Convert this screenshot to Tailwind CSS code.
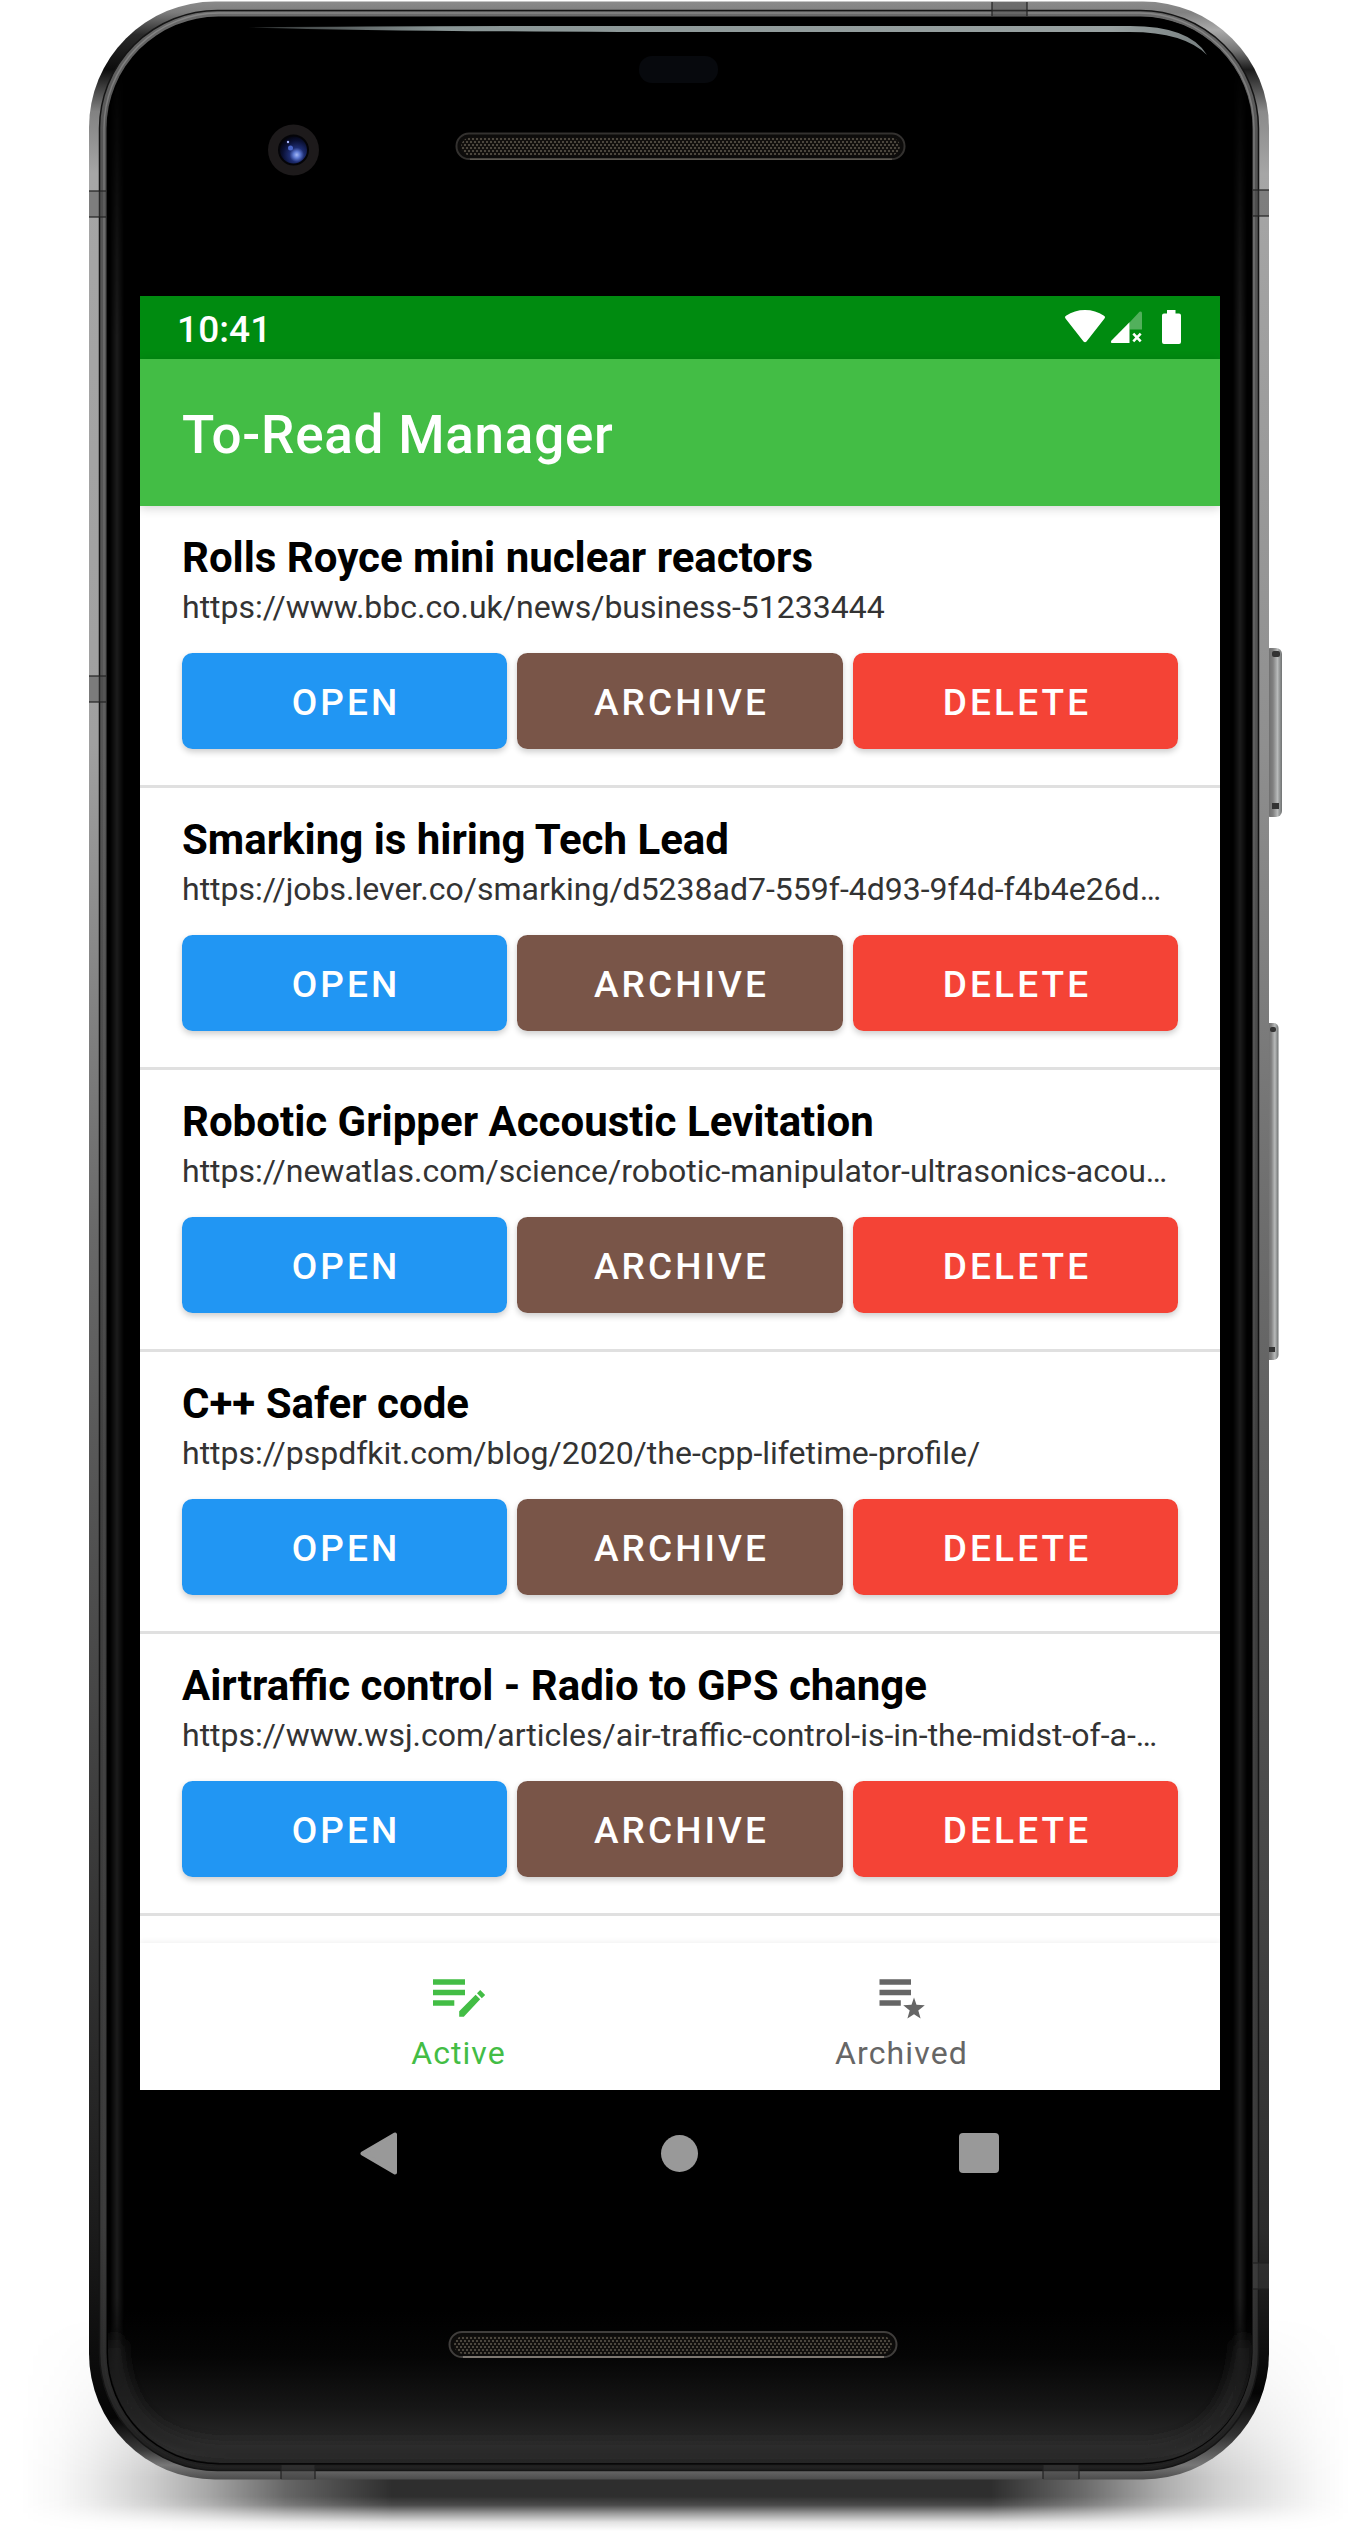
<!DOCTYPE html>
<html lang="en">
<head>
<meta charset="utf-8">
<title>To-Read Manager</title>
<script src="https://cdn.jsdelivr.net/npm/@tailwindcss/browser@4"></script>
</head>
<body class="bg-white">
<main class="relative w-[1370px] h-[2534px] overflow-hidden px-[140px] pt-[296px] font-[Roboto,sans-serif]">
  <!-- device frame -->
  <svg class="absolute inset-0 w-[1370px] h-[2534px]" viewBox="0 0 1370 2534" aria-hidden="true">
    <defs>
      <linearGradient id="rimL" gradientUnits="userSpaceOnUse" x1="0" y1="0" x2="0" y2="2480">
        <stop offset="0" stop-color="#8c8c8c"/><stop offset=".005" stop-color="#7d7d7d"/><stop offset=".014" stop-color="#2a2a2a"/><stop offset=".028" stop-color="#0c0c0c"/><stop offset=".045" stop-color="#828282"/><stop offset=".07" stop-color="#a6a6a6"/>
        <stop offset=".3" stop-color="#a0a0a0"/><stop offset=".5" stop-color="#686868"/><stop offset=".75" stop-color="#3a3a3a"/><stop offset=".9" stop-color="#1b1b1b"/><stop offset=".975" stop-color="#050505"/><stop offset=".988" stop-color="#3a3a3a"/><stop offset=".994" stop-color="#777"/><stop offset="1" stop-color="#4a4a4a"/>
      </linearGradient>
      <linearGradient id="rimR" gradientUnits="userSpaceOnUse" x1="0" y1="0" x2="0" y2="2480">
        <stop offset="0" stop-color="#8c8c8c"/><stop offset=".005" stop-color="#808080"/><stop offset=".012" stop-color="#aaa"/><stop offset=".02" stop-color="#777"/><stop offset=".028" stop-color="#1c1c1c"/><stop offset=".045" stop-color="#8a8a8a"/><stop offset=".07" stop-color="#a6a6a6"/>
        <stop offset=".3" stop-color="#8f8f8f"/><stop offset=".5" stop-color="#6c6c6c"/><stop offset=".77" stop-color="#444"/><stop offset=".9" stop-color="#2b2b2b"/><stop offset=".965" stop-color="#040404"/><stop offset=".982" stop-color="#333"/><stop offset=".994" stop-color="#777"/><stop offset="1" stop-color="#4a4a4a"/>
      </linearGradient>
      <linearGradient id="bevel" gradientUnits="userSpaceOnUse" x1="0" y1="8" x2="0" y2="2472">
        <stop offset="0" stop-color="#6b6b6b"/><stop offset=".05" stop-color="#555"/><stop offset=".3" stop-color="#555"/><stop offset=".6" stop-color="#3f3f3f"/><stop offset=".9" stop-color="#3a3a3a"/><stop offset="1" stop-color="#1e1e1e"/>
      </linearGradient>
      <linearGradient id="bevelLine" gradientUnits="userSpaceOnUse" x1="0" y1="8" x2="0" y2="2472">
        <stop offset="0" stop-color="#999" stop-opacity=".6"/><stop offset=".3" stop-color="#777" stop-opacity=".35"/><stop offset="1" stop-color="#444" stop-opacity=".1"/>
      </linearGradient>
      <linearGradient id="chin" gradientUnits="userSpaceOnUse" x1="0" y1="2310" x2="0" y2="2464">
        <stop offset="0" stop-color="#000"/><stop offset=".3" stop-color="#050505"/><stop offset=".65" stop-color="#171717"/><stop offset=".92" stop-color="#2d2d2d"/><stop offset="1" stop-color="#202020"/>
      </linearGradient>
      <linearGradient id="streak" x1="0" y1="0" x2="1" y2="0">
        <stop offset="0" stop-color="#8e9899" stop-opacity=".3"/><stop offset=".2" stop-color="#8a9696"/><stop offset=".9" stop-color="#98a1a1"/><stop offset="1" stop-color="#777f80"/>
      </linearGradient>
      <linearGradient id="edgeGlow" x1="0" y1="0" x2="1" y2="0">
        <stop offset="0" stop-color="#1c1c1c" stop-opacity="0"/><stop offset=".5" stop-color="#1c1c1c"/><stop offset="1" stop-color="#1c1c1c" stop-opacity="0"/>
      </linearGradient>
      <linearGradient id="glowFade" x1="0" y1="0" x2="0" y2="1">
        <stop offset="0" stop-color="#000"/><stop offset=".12" stop-color="#fff"/><stop offset=".96" stop-color="#fff"/><stop offset="1" stop-color="#000"/>
      </linearGradient>
      <mask id="glowMask" maskUnits="userSpaceOnUse" x="100" y="60" width="1160" height="2330"><rect x="100" y="60" width="1160" height="2330" fill="url(#glowFade)"/></mask>
      <linearGradient id="key" x1="0" y1="0" x2="1" y2="0">
        <stop offset="0" stop-color="#5c5c5c"/><stop offset=".5" stop-color="#808080"/><stop offset=".75" stop-color="#b8baba"/><stop offset="1" stop-color="#6e7171"/>
      </linearGradient>
      <radialGradient id="lens" cx=".62" cy=".68" r=".75">
        <stop offset="0" stop-color="#a5b8f5"/><stop offset=".16" stop-color="#5f7bd4"/><stop offset=".36" stop-color="#1d2c70"/><stop offset=".7" stop-color="#0a1033"/><stop offset="1" stop-color="#020208"/>
      </radialGradient>
      <linearGradient id="shadeX" gradientUnits="userSpaceOnUse" x1="20" y1="0" x2="1350" y2="0">
        <stop offset="0" stop-opacity="0"/><stop offset=".03" stop-opacity=".03"/><stop offset=".055" stop-opacity=".08"/><stop offset=".1" stop-opacity=".2"/><stop offset=".14" stop-opacity=".34"/><stop offset=".2" stop-opacity=".6"/><stop offset=".28" stop-opacity=".82"/>
        <stop offset=".73" stop-opacity=".82"/><stop offset=".8" stop-opacity=".58"/><stop offset=".86" stop-opacity=".32"/><stop offset=".9" stop-opacity=".19"/><stop offset=".945" stop-opacity=".09"/><stop offset=".975" stop-opacity=".03"/><stop offset="1" stop-opacity="0"/>
      </linearGradient>
      <linearGradient id="shadeY" gradientUnits="userSpaceOnUse" x1="0" y1="2315" x2="0" y2="2531">
        <stop offset="0" stop-color="#000"/><stop offset=".3" stop-color="#444"/><stop offset=".55" stop-color="#999"/><stop offset=".75" stop-color="#fff"/><stop offset=".84" stop-color="#fff"/><stop offset=".88" stop-color="#ddd"/><stop offset=".92" stop-color="#777"/><stop offset=".96" stop-color="#222"/><stop offset="1" stop-color="#000"/>
      </linearGradient>
      <mask id="shadeMask" maskUnits="userSpaceOnUse" x="0" y="2300" width="1370" height="234"><rect y="2300" width="1370" height="234" fill="url(#shadeY)"/></mask>
      <pattern id="mesh" width="4" height="6" patternUnits="userSpaceOnUse">
        <rect width="4" height="6" fill="#12100e"/><rect x="0" y="0" width="2" height="2" fill="#4c473e"/><rect x="2" y="3" width="2" height="2" fill="#4c473e"/>
      </pattern>
      <filter id="soft" x="-20%" y="-60%" width="140%" height="220%"><feGaussianBlur stdDeviation="8"/></filter>
      <clipPath id="left"><rect width="680" height="2534"/></clipPath>
      <clipPath id="right"><rect x="680" width="690" height="2534"/></clipPath>
      <clipPath id="glassClip"><rect x="108" y="17" width="1144" height="2447" rx="112"/></clipPath>
    </defs>

    <!-- ground shadow -->
    <rect x="20" y="2310" width="1330" height="224" fill="url(#shadeX)" mask="url(#shadeMask)"/>

    <!-- side keys -->
    <rect x="1264" y="648" width="18" height="169" rx="6" fill="url(#key)"/>
    <rect x="1272" y="651" width="8" height="6" rx="2" fill="#333"/><rect x="1272" y="803" width="7" height="6" fill="#333"/>
    <rect x="1264" y="1023" width="14.500" height="337" rx="5" fill="url(#key)"/>
    <rect x="1270" y="1027" width="6" height="5" rx="2" fill="#333"/><rect x="1269" y="1347" width="6" height="5" fill="#333"/>

    <!-- metal rim -->
    <rect x="89" y="1.500" width="1180" height="2478" rx="126" fill="url(#rimL)" clip-path="url(#left)"/>
    <rect x="89" y="1.500" width="1180" height="2478" rx="126" fill="url(#rimR)" clip-path="url(#right)"/>
    <rect x="99.500" y="10.500" width="1159" height="2460" rx="118" fill="url(#bevel)" stroke="#151515" stroke-width="1.500"/>
    <rect x="104" y="13" width="1150" height="2454" rx="115" fill="none" stroke="url(#bevelLine)" stroke-width="1.500"/>
    <path fill="#444" fill-opacity=".4" d="M89 191h17v26H89zM89 676h17v26H89zM1253 190h16v26h-16zM1253 2263h16v26h-16zM992 2h35v14h-35zM281 2465h34v15h-34zM1043 2465h36v15h-36z"/>
    <path stroke="#222" stroke-opacity=".8" stroke-width="1.500" d="M89 191h17M89 217h17M89 676h17M89 702h17M1253 190h16M1253 216h16M1253 2263h16M1253 2289h16M992 2v14M1027 2v14M281 2465v14M315 2465v14M1043 2465v14M1079 2465v14"/>

    <!-- glass -->
    <rect x="106.500" y="16.500" width="1146" height="2448" rx="112" fill="#000"/>
    <rect x="108" y="17" width="1144" height="2446" rx="111" fill="url(#chin)"/>
    <g clip-path="url(#glassClip)">
      <g mask="url(#glowMask)">
        <rect x="110" y="60" width="14" height="2330" fill="url(#edgeGlow)"/>
        <rect x="1233" y="60" width="14" height="2330" fill="url(#edgeGlow)"/>
      </g>
      <path d="M114 2345q4 104 111 107H1143q92-3 101-107" fill="none" stroke="#2b2b2b" stroke-width="12" stroke-linecap="round" filter="url(#soft)"/>
    </g>
    <path d="M248 27.500Q380 26 620 26H1130Q1190 26 1207 55Q1184 32 1130 32H620Q380 31 248 27.500Z" fill="url(#streak)"/>

    <!-- sensor, camera, speakers -->
    <rect x="639" y="56" width="79" height="27" rx="13" fill="#07090d"/>
    <circle cx="293.500" cy="150" r="25.500" fill="#1d1a1b"/>
    <circle cx="293.500" cy="150" r="15.500" fill="#040408"/>
    <circle cx="293.500" cy="150" r="13.500" fill="url(#lens)"/>
    <circle cx="290.500" cy="148" r="2.500" fill="#4a66c8"/><circle cx="288" cy="142" r="1.200" fill="#aab8ff"/>
    <rect x="456.500" y="133.500" width="448" height="25.500" rx="12.500" fill="#0d0c0b" stroke="#33312f" stroke-width="2"/>
    <rect x="461" y="137.500" width="439" height="18" rx="9" fill="url(#mesh)"/>
    <path d="M470 159.200H892" stroke="#5c5851" stroke-width="1.500"/>
    <rect x="449.500" y="2332" width="447" height="25" rx="12.500" fill="#0d0c0b" stroke="#403e3c" stroke-width="2"/>
    <rect x="454" y="2336" width="438" height="18" rx="9" fill="url(#mesh)"/>
    <path d="M463 2357H884" stroke="#7d7770" stroke-width="1.800"/>
  </svg>

  <!-- screen -->
  <div class="relative flex h-[1920px] w-[1080px] flex-col bg-black">
    <div class="flex h-[63px] shrink-0 items-center justify-between bg-[#008b10] pl-[37px] pr-[39px] text-white">
      <span class="text-[37px] leading-none font-medium tracking-[0.1px] pt-[3px]">10:41</span>
      <svg class="h-[35px] w-[118px]" viewBox="0 0 118 35" fill="#fff" aria-hidden="true">
        <path d="M2.500 8.500Q1 7 3 5.700Q11.500 0 22 0T41 5.700Q43 7 41.500 8.500L23.500 31.500Q22 33 20.500 31.500Z"/>
        <path d="M76.500 1.800Q79 .5 79 3.500V19.500H66.500V12.500Z" fill-opacity=".32"/>
        <path d="M66.500 12.200V33H49Q47 32.500 48.500 30.500Z"/>
        <path d="M70.300 23.700L77.700 31.300M77.700 23.700L70.300 31.300" stroke="#fff" stroke-width="2.600"/>
        <path d="M104 0h8.500v3.500H116q2 0 2 2V32q0 2-2 2h-15q-2 0-2-2V5.500q0-2 2-2h3Z"/>
      </svg>
    </div>
    <header class="relative z-10 flex h-[147px] shrink-0 items-center bg-[#43bd45] px-[42px] pt-[5px] shadow-[0_2px_10px_rgba(0,0,0,0.18)]">
      <h1 class="text-[53px] leading-none font-medium tracking-[0.75px] whitespace-nowrap text-white">To-Read Manager</h1>
    </header>
    <div id="list" class="h-[1437px] shrink-0 overflow-hidden bg-white"></div>
    <nav class="relative flex h-[147px] shrink-0 justify-center bg-white shadow-[0_-2px_5px_rgba(0,0,0,0.05)]">
      <a class="flex w-[443px] flex-col items-center pt-[31px] text-[#43bd45]">
        <svg class="-ml-[2px] h-[46px] w-[56px]" viewBox="0 0 56 46" fill="currentColor" aria-hidden="true"><path d="M3 5.300h32v5.500H3zM3 15.800h32v5.500H3zM3 26.300h21.300v5.500H3zM29.200 37.200L45.600 20.700L50.200 25.200L33.800 42.800H29.200ZM47 19.300L50.200 16L55.200 21L51.800 24.200Z"/></svg>
        <span class="mt-[17px] text-[32px] leading-none tracking-[1.06px]">Active</span>
      </a>
      <a class="flex w-[443px] flex-col items-center pt-[31px] text-[#666]">
        <svg class="-ml-[2px] h-[46px] w-[56px]" viewBox="0 0 56 46" fill="currentColor" aria-hidden="true"><path d="M6.500 5.300h31.500v5.500H6.500zM6.500 15.800h31.500v5.500H6.500zM6.500 26.300h21.300v5.500H6.500zM41 23.500L43.500 30.800L51.800 31.300L45.300 36.500L47.600 44.500L41 40.200L34.400 44.500L36.700 36.500L30.200 31.300L38.500 30.800Z"/></svg>
        <span class="mt-[17px] text-[32px] leading-none tracking-[1.15px]">Archived</span>
      </a>
    </nav>
    <div class="flex h-[126px] shrink-0 items-center justify-between pl-[220px] pr-[221px]">
      <svg class="h-[43px] w-[40px]" viewBox="0 0 40 43" fill="#999" stroke="#999" stroke-width="4" stroke-linejoin="round" aria-hidden="true"><path d="M2.500 21.500L35 2.500V40.500Z"/></svg>
      <div class="size-[37px] rounded-full bg-[#999]"></div>
      <div class="size-[40px] rounded-[4px] bg-[#999]"></div>
    </div>
  </div>
</main>
<template id="row">
  <article class="h-[282px] border-b-[3px] border-[#e0e0e0] px-[42px] pt-[27px]">
    <h2 class="text-[42px] leading-[50px] font-bold whitespace-nowrap text-black"></h2>
    <p class="h-[49px] overflow-visible whitespace-nowrap text-[32px] leading-[49px] text-[#333]"></p>
    <div class="mt-[21px] grid h-[96px] grid-cols-[325px_326px_325px] gap-[10px] text-[37px] font-medium tracking-[3.1px] text-white">
      <button class="rounded-[10.5px] bg-[#2196f3] pt-[3px] pl-[3px] shadow-[0_3px_6px_rgba(0,0,0,0.2)]">OPEN</button>
      <button class="rounded-[10.5px] bg-[#795548] pt-[3px] pl-[3px] shadow-[0_3px_6px_rgba(0,0,0,0.2)]">ARCHIVE</button>
      <button class="rounded-[10.5px] bg-[#f44336] pt-[3px] pl-[3px] shadow-[0_3px_6px_rgba(0,0,0,0.2)]">DELETE</button>
    </div>
  </article>
</template>
<script>
  const items = [
    ["Rolls Royce mini nuclear reactors", "https://www.bbc.co.uk/news/business-51233444"],
    ["Smarking is hiring Tech Lead", "https://jobs.lever.co/smarking/d5238ad7-559f-4d93-9f4d-f4b4e26d…"],
    ["Robotic Gripper Accoustic Levitation", "https://newatlas.com/science/robotic-manipulator-ultrasonics-acou…"],
    ["C++ Safer code", "https://pspdfkit.com/blog/2020/the-cpp-lifetime-profile/"],
    ["Airtraffic control - Radio to GPS change", "https://www.wsj.com/articles/air-traffic-control-is-in-the-midst-of-a-…"]
  ];
  const list = document.getElementById("list");
  for (const [title, url] of items) {
    const row = document.getElementById("row").content.cloneNode(true);
    row.querySelector("h2").textContent = title;
    row.querySelector("p").textContent = url;
    list.append(row);
  }
</script>
</body>
</html>
